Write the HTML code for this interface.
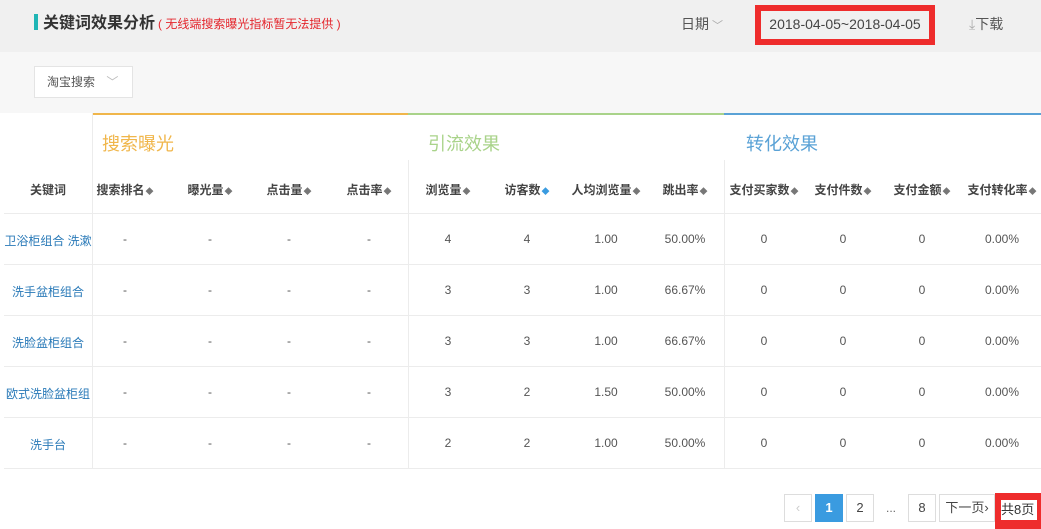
<!DOCTYPE html><html><head><meta charset="utf-8"><style>
*{margin:0;padding:0;box-sizing:border-box}
body{width:1041px;height:529px;overflow:hidden;background:#fff;font-family:"Liberation Sans","Microsoft YaHei","Noto Sans CJK SC",sans-serif;position:relative;color:#333;font-size:12px}
.a{position:absolute}
.top{left:0;top:0;width:1041px;height:52px;background:#f0f0f0}
.band{left:0;top:52px;width:1041px;height:61px;background:#f7f7f7}
.c{position:absolute;text-align:center;white-space:nowrap}
.hl{position:absolute;height:1px;background:#ececec;left:4px;width:1037px}
.vl{position:absolute;width:1px;background:#ececec}
.s{font-size:8px;color:#777;margin-left:1px}
.pg{position:absolute;top:494px;height:28px;border:1px solid #ddd;font-size:13px;text-align:center;line-height:26px;color:#444;background:#fff}
</style></head><body>
<div class="a top"></div><div class="a band"></div>
<div class="a" style="left:34px;top:14px;width:4px;height:16px;background:#1fb5b5"></div>
<div class="a" style="left:43px;top:9px;font-size:16px;font-weight:bold;color:#333">关键词效果分析<span style="font-size:12px;font-weight:normal;color:#e4262d;margin-left:3px">( 无线端搜索曝光指标暂无法提供 )</span></div>
<div class="a" style="left:681px;top:14px;font-size:14px;color:#555">日期<span style="color:#aaa;font-size:11px"> ﹀</span></div>
<div class="a" style="left:755px;top:5px;width:180px;height:40px;border:6px solid #ee2c2c;background:#f0f0f0;font-size:14px;color:#444;text-align:center;line-height:26px">2018-04-05~2018-04-05</div>
<div class="a" style="left:969px;top:14px;font-size:14px;color:#555"><span style="color:#aaa">⤓</span>下载</div>
<div class="a" style="left:34px;top:66px;width:99px;height:32px;background:#fff;border:1px solid #e4e4e4;font-size:12px;color:#555;line-height:30px;padding-left:12px">淘宝搜索 <span style="color:#bbb;margin-left:8px">﹀</span></div>
<div class="a" style="left:4px;top:113px;width:1037px;height:356px;background:#fff"></div>
<div class="a" style="left:92px;top:113px;width:316px;height:2px;background:#f0b64b"></div>
<div class="a" style="left:408px;top:113px;width:316px;height:2px;background:#a9d38a"></div>
<div class="a" style="left:724px;top:113px;width:317px;height:2px;background:#5aa2d6"></div>
<div class="a" style="left:102px;top:130px;font-size:18px;color:#f0b64b">搜索曝光</div>
<div class="a" style="left:428px;top:130px;font-size:18px;color:#a9d38a">引流效果</div>
<div class="a" style="left:746px;top:130px;font-size:18px;color:#5aa2d6">转化效果</div>
<div class="vl" style="left:92px;top:113px;height:356px"></div>
<div class="vl" style="left:408px;top:160px;height:309px"></div>
<div class="vl" style="left:724px;top:160px;height:309px"></div>
<div class="hl" style="top:213px"></div><div class="hl" style="top:264px"></div><div class="hl" style="top:315px"></div><div class="hl" style="top:366px"></div><div class="hl" style="top:417px"></div><div class="hl" style="top:468px"></div>
<div id="t"></div>
<div class="pg" style="left:784px;width:28px;color:#ccc">‹</div>
<div class="pg" style="left:815px;width:28px;background:#3a9be0;border-color:#3a9be0;color:#fff;font-weight:bold">1</div>
<div class="pg" style="left:846px;width:28px">2</div>
<div class="a" style="left:886px;top:501px;color:#666">...</div>
<div class="pg" style="left:908px;width:28px">8</div>
<div class="pg" style="left:939px;width:56px">下一页›</div>
<div class="a" style="left:995px;top:493px;width:46px;height:36px;background:#ee2c2c"></div>
<div class="a" style="left:1001px;top:500px;width:36px;height:20px;background:#fff;font-size:13px;line-height:20px">共8页</div>
<script>
var cx=[48,125,210,289,369,448,527,606,685,764,843,922,1002];
var h=["关键词","搜索排名","曝光量","点击量","点击率","浏览量","访客数","人均浏览量","跳出率","支付买家数","支付件数","支付金额","支付转化率"];
var r=[["卫浴柜组合 洗漱","4","4","1.00","50.00%"],["洗手盆柜组合","3","3","1.00","66.67%"],["洗脸盆柜组合","3","3","1.00","66.67%"],["欧式洗脸盆柜组","3","2","1.50","50.00%"],["洗手台","2","2","1.00","50.00%"]];
var o="";
h.forEach(function(t,i){o+='<div class="c" style="left:'+(cx[i]-50)+'px;width:100px;top:181px;font-weight:bold;color:#444">'+t+(i?'<span class="s" style="'+(i==6?'color:#3a9be0':'')+'">◆</span>':'')+'</div>';});
r.forEach(function(x,j){var y=232+j*51;var v=[x[0],"-","-","-","-",x[1],x[2],x[3],x[4],"0","0","0","0.00%"];
v.forEach(function(t,i){o+='<div class="c" style="left:'+(cx[i]-50)+'px;width:100px;top:'+y+'px;color:'+(i?'#555':'#2a7ab8')+'">'+t+'</div>';});});
document.getElementById("t").innerHTML=o;
</script>
</body></html>
